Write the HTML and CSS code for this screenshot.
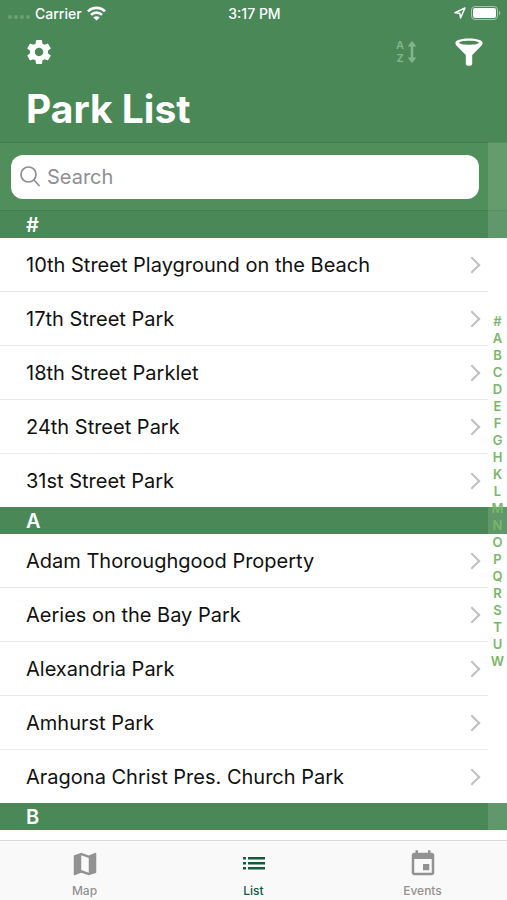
FILE: index.html
```html
<!DOCTYPE html>
<html lang="en">
<head>
  <meta charset="utf-8">
  <meta name="viewport" content="width=device-width, initial-scale=1">
  <title>Park List</title>
  <link rel="stylesheet" href="styles.css">
</head>
<body>
  <div class="app">
    <header class="header">
      <div class="status-bar">
        <div class="carrier">
          <span class="signal"><i></i><i></i><i></i><i></i></span>
          <span>Carrier</span>
          <svg width="19" height="15" viewBox="0 0 19 15" fill="none" stroke="#fff" stroke-width="2.700">
            <path d="M1 5.400a12 12 0 0 1 17 0M4 8.900a7.800 7.800 0 0 1 11 0"/>
            <path d="M9.500 14.500L6.300 11.500a4.500 4.500 0 0 1 6.400 0z" fill="#fff" stroke="none"/>
          </svg>
        </div>
        <div class="clock">3:17 PM</div>
        <div class="battery">
          <svg width="12" height="12" viewBox="0 0 12 12" fill="none" stroke="#fff" stroke-width="1.500" stroke-linejoin="round">
            <path d="M1 5.700L11 1L6.500 11L5.800 6.200z"/>
          </svg>
          <svg width="30" height="14" viewBox="0 0 30 14">
            <rect x="0.500" y="0.500" width="26" height="13" rx="3.500" fill="none" stroke="#a5c6ac"/>
            <rect x="2" y="2" width="23" height="10" rx="2" fill="#fff"/>
            <path d="M28 4.800v4.400c1.800-.8 1.800-3.600 0-4.400z" fill="#a5c6ac"/>
          </svg>
        </div>
      </div>

      <div class="toolbar">
        <button class="icon-button" aria-label="Settings">
          <svg width="30" height="30" viewBox="-0.500 -0.500 25 25" fill="#fff">
            <path d="M19.430 12.980c.04-.32.07-.64.07-.98s-.03-.66-.07-.98l2.110-1.650c.19-.15.24-.42.12-.64l-2-3.460c-.12-.22-.39-.3-.61-.22l-2.490 1c-.52-.4-1.080-.73-1.690-.98l-.38-2.650C14.460 2.180 14.250 2 14 2h-4c-.25 0-.46.18-.49.42l-.38 2.650c-.61.25-1.170.59-1.690.98l-2.490-1c-.23-.09-.49 0-.61.22l-2 3.460c-.13.22-.07.49.12.64l2.110 1.650c-.04.32-.07.65-.07.98s.03.66.07.98l-2.110 1.650c-.19.15-.24.42-.12.64l2 3.460c.12.22.39.3.61.22l2.490-1c.52.4 1.080.73 1.690.98l.38 2.650c.03.24.24.42.49.42h4c.25 0 .46-.18.49-.42l.38-2.650c.61-.25 1.170-.59 1.690-.98l2.490 1c.23.09.49 0 .61-.22l2-3.460c.12-.22.07-.49-.12-.64l-2.110-1.650zM12 15.500c-1.930 0-3.500-1.570-3.500-3.500s1.570-3.500 3.500-3.500 3.500 1.570 3.500 3.500-1.570 3.500-3.500 3.500z"/>
          </svg>
        </button>
        <div class="tools">
          <button class="icon-button sort" aria-label="Sort A to Z" disabled>
            <span class="sort-letters"><span>A</span><span>Z</span></span>
            <svg width="10" height="24" viewBox="0 0 10 24" fill="#84b48c">
              <path d="M5 1L9.300 6.500H6.300v11H9.300L5 23L.7 17.500h3v-11h-3z"/>
            </svg>
          </button>
          <button class="icon-button" aria-label="Filter">
            <svg width="28" height="28" viewBox="0 0 28 28" fill="#fff">
              <path fill-rule="evenodd" d="M.4 4.800C.4 2.200 6.500.4 14 .4s13.600 1.800 13.600 4.400c0 1.500-.7 2.500-1.700 3.500l-8.700 8.600v9c0 1.100-1.300 1.900-3.200 1.900s-3.200-.8-3.200-1.900v-9L2.100 8.300C1.100 7.300.4 6.300.4 4.800zM14 2.800c-5.500 0-9.800.9-9.800 2s4.300 2 9.800 2 9.800-.9 9.800-2-4.300-2-9.800-2z"/>
            </svg>
          </button>
        </div>
      </div>
      <h1 class="title">Park List</h1>
    </header>

    <main class="content">
      <div class="search">
        <label class="search-box">
          <svg width="20" height="21" viewBox="0 0 20 21" fill="none" stroke="#8e8e93" stroke-width="1.700" stroke-linecap="round">
            <circle cx="8.500" cy="8.500" r="7.500"/>
            <path d="M14 14l5 5.500"/>
          </svg>
          <input type="search" placeholder="Search" aria-label="Search">
        </label>
      </div>

      <section>
        <h2 class="section-title">#</h2>
        <ul class="parks">
          <li><a href="#">10th Street Playground on the Beach</a></li>
          <li><a href="#">17th Street Park</a></li>
          <li><a href="#">18th Street Parklet</a></li>
          <li><a href="#">24th Street Park</a></li>
          <li><a href="#">31st Street Park</a></li>
        </ul>
      </section>
      <section>
        <h2 class="section-title">A</h2>
        <ul class="parks">
          <li><a href="#">Adam Thoroughgood Property</a></li>
          <li><a href="#">Aeries on the Bay Park</a></li>
          <li><a href="#">Alexandria Park</a></li>
          <li><a href="#">Amhurst Park</a></li>
          <li><a href="#">Aragona Christ Pres. Church Park</a></li>
        </ul>
      </section>
      <section>
        <h2 class="section-title">B</h2>
      </section>

      <nav class="index" aria-label="Index">
        <a href="#">#</a>
        <a href="#">A</a>
        <a href="#">B</a>
        <a href="#">C</a>
        <a href="#">D</a>
        <a href="#">E</a>
        <a href="#">F</a>
        <a href="#">G</a>
        <a href="#">H</a>
        <a href="#">K</a>
        <a href="#">L</a>
        <a href="#">M</a>
        <a href="#">N</a>
        <a href="#">O</a>
        <a href="#">P</a>
        <a href="#">Q</a>
        <a href="#">R</a>
        <a href="#">S</a>
        <a href="#">T</a>
        <a href="#">U</a>
        <a href="#">W</a>
      </nav>
    </main>

    <nav class="tabs">
      <a href="#" class="tab">
        <svg width="30" height="30" viewBox="0 0 24 24" fill="currentColor">
          <path d="M20.500 3l-.16.03L15 5.100 9 3 3.360 4.900c-.21.07-.36.25-.36.48V20.500c0 .28.22.5.5.5l.16-.03L9 18.900l6 2.100 5.640-1.900c.21-.07.36-.25.36-.48V3.500c0-.28-.22-.5-.5-.5zM15 19l-6-2.110V5l6 2.110V19z"/>
        </svg>
        <span>Map</span>
      </a>
      <a href="#" class="tab active">
        <svg width="30" height="30" viewBox="0 0 30 30" fill="currentColor">
          <path d="M4 8h3v2.600H4zM4 13h3v2.600H4zM4 18h3v2.600H4zM9 8h17v2.600H9zM9 13h17v2.600H9zM9 18h17v2.600H9z"/>
        </svg>
        <span>List</span>
      </a>
      <a href="#" class="tab">
        <svg width="30" height="30" viewBox="0 0 24 24" fill="currentColor">
          <path d="M17 12h-5v5h5v-5zM16 1v2H8V1H6v2H5c-1.110 0-1.990.9-1.990 2L3 19c0 1.100.89 2 2 2h14c1.100 0 2-.9 2-2V5c0-1.100-.9-2-2-2h-1V1h-2zm3 18H5V8h14v11z"/>
        </svg>
        <span>Events</span>
      </a>
    </nav>
  </div>
</body>
</html>
```
FILE: styles.css
```css
* {
  box-sizing: border-box;
}

body {
  margin: 0;
  font-family: Inter, "Liberation Sans", sans-serif;
  color: #111;
  background: #fff;
}

a {
  color: inherit;
  text-decoration: none;
}

.app {
  display: flex;
  flex-direction: column;
  height: 100vh;
  overflow: hidden;
}

/* header */
.header {
  flex: none;
  background: #4a8957;
  color: #fff;
}

.status-bar {
  display: grid;
  grid-template-columns: 1fr auto 1fr;
  align-items: center;
  height: 26px;
  padding: 0 6px 0 8px;
  font-size: 14px;
  font-weight: 500;
}

.carrier,
.battery {
  display: flex;
  align-items: center;
  gap: 5px;
}

.battery {
  justify-content: flex-end;
}

.signal {
  display: flex;
  gap: 2px;
  padding-top: 8px;
}

.signal i {
  width: 4px;
  height: 4px;
  border-radius: 50%;
  background: #6a9f74;
}

.toolbar {
  display: flex;
  justify-content: space-between;
  align-items: center;
  height: 52px;
  padding: 0 24px;
}

.tools {
  display: flex;
  gap: 38px;
}

.icon-button {
  display: flex;
  align-items: center;
  padding: 0;
  border: none;
  background: none;
  cursor: pointer;
}

.sort {
  gap: 3px;
  font-family: inherit;
  color: #84b48c;
}

.sort-letters {
  display: flex;
  flex-direction: column;
  font-size: 11px;
  line-height: 13px;
  font-weight: 600;
}

.title {
  margin: 0;
  padding: 11px 26px 13px;
  font-size: 39px;
  line-height: 40px;
  font-weight: 700;
}

/* list */
.content {
  position: relative;
  flex: 1;
  min-height: 0;
  overflow: hidden;
}

.search {
  padding: 12px 28px 11px 11px;
  background: #508f5b;
  border-top: 1px solid #427d4e;
  border-bottom: 1px solid #427d4e;
}

.search-box {
  display: flex;
  align-items: center;
  gap: 7px;
  height: 44px;
  padding: 0 9px 1px;
  border-radius: 12px;
  background: #fff;
}

.search-box input {
  flex: 1;
  min-width: 0;
  padding: 0;
  border: none;
  outline: none;
  background: none;
  font-family: inherit;
  font-size: 20px;
}

.search-box input::placeholder {
  color: #8e8e93;
}

.section-title {
  margin: 0;
  padding: 2px 26px 0;
  background: #4a8957;
  color: #fff;
  font-size: 20px;
  line-height: 25px;
  font-weight: 600;
}

.parks {
  margin: 0;
  padding: 0 19px 0 0;
  list-style: none;
}

.parks li + li {
  border-top: 1px solid #e9e9e9;
}

.parks a {
  display: flex;
  justify-content: space-between;
  align-items: center;
  height: 53px;
  padding: 0 10px 0 26px;
  font-size: 20px;
}

.parks a::after {
  content: "";
  width: 10px;
  height: 10px;
  border-top: 2px solid #c0c0c4;
  border-right: 2px solid #c0c0c4;
  transform: rotate(45deg);
}

/* letter strip over the right edge */
.index {
  position: absolute;
  top: 0;
  right: 0;
  bottom: 0;
  width: 19px;
  display: flex;
  flex-direction: column;
  justify-content: center;
  background: rgba(255, 255, 255, 0.12);
  color: #79b869;
  font-size: 13px;
  line-height: 17px;
  font-weight: 600;
  text-align: center;
}

/* bottom tabs */
.tabs {
  flex: none;
  display: grid;
  grid-template-columns: repeat(3, 1fr);
  height: 60px;
  border-top: 1px solid #d8d8d8;
  background: #f9f9f9;
}

.tab {
  display: flex;
  flex-direction: column;
  align-items: center;
  gap: 4px;
  padding-top: 8px;
  color: #929292;
  font-size: 12px;
  line-height: 16px;
  font-weight: 500;
}

.tab.active {
  color: #17593f;
}
```
